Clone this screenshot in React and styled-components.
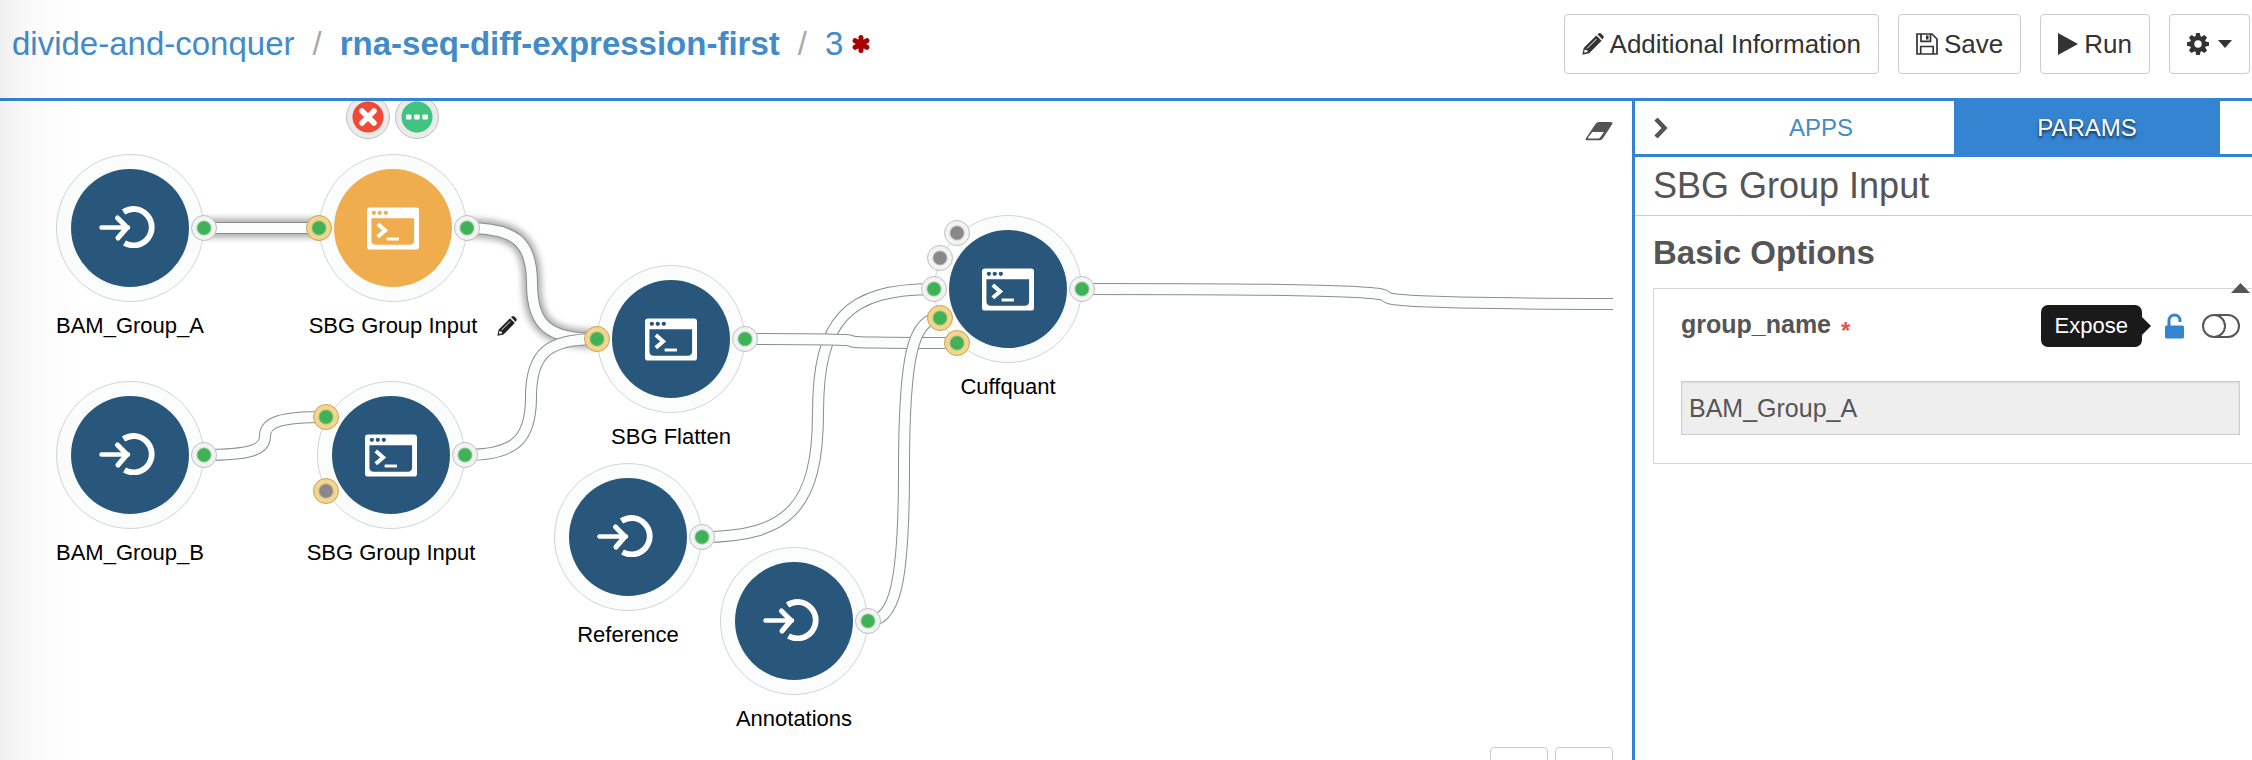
import React from "react";
import styled, { createGlobalStyle, css } from "styled-components";

const BLUE = "#3484d2";
const LINK = "#428bca";
const NAVY = "#29567b";
const INK = "#333";
const TEXT = "#555";

const GlobalStyle = createGlobalStyle`
  *, *::before, *::after { box-sizing: border-box; }
  body {
    margin: 0;
    background: #fff;
    color: ${TEXT};
    font-family: "Liberation Sans", Arial, Helvetica, sans-serif;
    font-size: 25px;
  }
  button, input { font: inherit; color: inherit; }
`;

const Page = styled.div`
  position: relative;
  display: flex;
  flex-direction: column;
  height: 100vh;
  overflow: hidden;

  &::after {
    content: "";
    position: absolute;
    inset: 0 auto 0 0;
    width: 80px;
    background: linear-gradient(to right, rgba(0, 0, 0, 0.06), rgba(0, 0, 0, 0.02) 40%, transparent);
    pointer-events: none;
  }
`;

const Header = styled.header`
  display: flex;
  align-items: flex-start;
  justify-content: space-between;
  height: 101px;
  flex: none;
  padding: 14px 2px 0 12px;
  border-bottom: 3px solid ${BLUE};
`;

const Crumbs = styled.nav`
  display: flex;
  align-items: center;
  gap: 18px;
  height: 60px;
  font-size: 33px;
  color: #aaa;
`;

const Crumb = styled.a`
  color: ${LINK};
  text-decoration: none;
  font-weight: ${(p) => (p.$strong ? 700 : 400)};
`;

const Revision = styled.span`
  display: flex;
  align-items: center;
  gap: 9px;
`;

const Actions = styled.div`
  display: flex;
  align-items: center;
  gap: 19px;
`;

const ToolButton = styled.button`
  display: flex;
  align-items: center;
  gap: ${(p) => (p.$menu ? 9 : 6)}px;
  height: 60px;
  padding: 0 17px;
  border: 1px solid #ccc;
  border-radius: 4px;
  background: #fff;
  color: ${INK};
  font-size: 26px;
`;

const Workspace = styled.div`
  display: flex;
  flex: 1;
  min-height: 0;
`;

const Canvas = styled.main`
  position: relative;
  flex: 1;
  min-width: 0;
  margin-right: 19px;
  overflow: hidden;
`;

const Wires = styled.svg`
  position: absolute;
  inset: 0;
  width: 100%;
  height: 100%;
`;

const EraseButton = styled.button`
  position: absolute;
  top: 20px;
  right: 0;
  display: flex;
  padding: 0;
  border: 0;
  background: none;
`;

const ZoomControls = styled.div`
  position: absolute;
  right: 0;
  bottom: -44px;
  display: flex;
  gap: 7px;
`;

const ZoomButton = styled.button`
  width: 58px;
  height: 57px;
  border: 1px solid #ccc;
  border-radius: 4px;
  background: #fff;
`;

const NodeBox = styled.div`
  position: absolute;
  left: ${(p) => p.$x - 74}px;
  top: ${(p) => p.$y - 74}px;
  width: 148px;
  display: flex;
  flex-direction: column;
  align-items: center;
  gap: 11px;
`;

const Ring = styled.div`
  position: relative;
  display: flex;
  align-items: center;
  justify-content: center;
  width: 148px;
  height: 148px;
  border: 1px solid #d4d4d4;
  border-radius: 50%;
  background: #fbfdfc;
`;

const Disc = styled.div`
  display: flex;
  align-items: center;
  justify-content: center;
  width: 118px;
  height: 118px;
  padding: ${(p) => (p.$app ? "0" : "0 5px 2px 0")};
  border-radius: 50%;
  background: ${(p) => (p.$selected ? "#f0ad4e" : NAVY)};
  color: ${(p) => (p.$selected ? "#f0ad4e" : NAVY)};
`;

const Label = styled.div`
  font-size: 22px;
  line-height: 26px;
  color: #000;
  white-space: nowrap;
`;

const Port = styled.div`
  position: absolute;
  left: ${(p) => 60 + p.$dx}px;
  top: ${(p) => 60 + p.$dy}px;
  width: 26px;
  height: 26px;
  border-radius: 50%;
  border: 1px solid #bfbfbf;
  background: radial-gradient(circle, ${(p) => (p.$linked ? "#40b157" : "#888")} 6px, ${(p) => (p.$required ? "#f4d590" : "#f3f3f3")} 8px);
  ${(p) => p.$required && css`border-color: #c4a155;`}
`;

const NodeActions = styled.div`
  position: absolute;
  left: 27px;
  top: -59px;
  display: flex;
  gap: 5px;
`;

const RoundButton = styled.button`
  display: flex;
  align-items: center;
  justify-content: center;
  width: 44px;
  height: 44px;
  padding: 0;
  border: 1px solid #c0c0c0;
  border-radius: 50%;
  background: radial-gradient(circle, ${(p) => p.$color} 15px, #ebebeb 16px);
`;

const RenameButton = styled.button`
  position: absolute;
  left: 178px;
  top: 162px;
  display: flex;
  padding: 0;
  border: 0;
  background: none;
`;

const Panel = styled.aside`
  flex: none;
  width: 620px;
  border-left: 3px solid ${BLUE};
`;

const Tabs = styled.div`
  display: flex;
  height: 56px;
  border-bottom: 3px solid ${BLUE};
`;

const Collapse = styled.button`
  display: flex;
  align-items: center;
  width: 53px;
  padding: 0 0 0 18px;
  border: 0;
  background: none;
`;

const Tab = styled.button`
  width: 266px;
  padding: 0;
  border: 0;
  font-size: 24px;
  background: ${(p) => (p.$active ? BLUE : "none")};
  color: ${(p) => (p.$active ? "#fff" : LINK)};
  text-shadow: ${(p) => (p.$active ? "0 2px 3px rgba(0, 0, 0, 0.7)" : "none")};
`;

const PanelTitle = styled.h1`
  margin: 0;
  padding: 8px 18px;
  font-size: 36px;
  line-height: 42px;
  font-weight: 400;
  border-bottom: 1px solid #ccc;
`;

const SectionTitle = styled.h2`
  margin: 0;
  padding: 18px 18px 16px;
  font-size: 33px;
  line-height: 38px;
`;

const Card = styled.section`
  position: relative;
  margin-left: 18px;
  padding: 16px 12px 28px 27px;
  border: 1px solid #d4d4d4;
  border-right: 0;
`;

const SortMark = styled.svg`
  position: absolute;
  top: -6px;
  right: 2px;
`;

const FieldHead = styled.div`
  display: flex;
  align-items: center;
  justify-content: space-between;
  height: 42px;
`;

const FieldLabel = styled.label`
  font-weight: 700;
`;

const Required = styled.span`
  margin-left: 3px;
  font-size: 24px;
  line-height: 1;
  vertical-align: sub;
  color: #e05551;
`;

const FieldTools = styled.div`
  display: flex;
  align-items: center;
`;

const Tip = styled.div`
  position: relative;
  margin-right: 23px;
  padding: 0 14px;
  border-radius: 7px;
  background: #1a1a1a;
  color: #fff;
  font-size: 22px;
  line-height: 42px;

  &::after {
    content: "";
    position: absolute;
    left: 100%;
    top: 12px;
    border: 9px solid transparent;
    border-left-color: #1a1a1a;
    border-right: 0;
  }
`;

const IconButton = styled.button`
  display: flex;
  margin-left: ${(p) => p.$gap || 0}px;
  padding: 0;
  border: 0;
  background: none;
`;

const TextField = styled.input`
  display: block;
  width: 100%;
  height: 54px;
  margin-top: 34px;
  padding: 0 7px;
  border: 1px solid #ccc;
  border-radius: 0;
  background: #eee;
  box-shadow: inset 0 1px 2px rgba(0, 0, 0, 0.08);
`;

const PencilIcon = ({ size = 22, color = INK }) => (
  <svg width={size} height={size} viewBox="0 0 22 22" aria-hidden="true">
    <path fill={color} d="M15.4 1.2 17 .2q1-.5 2 .4l2.200 2.200q.9 1 .3 2l-1 1.700zM14.300 2.400l5.300 5.300L7.200 20.300.4 21.700l1.300-6.700zM2.700 16.200l-.6 3.500 3.500-.7-.2-1.800-2-.2z" fillRule="evenodd" />
    <path d="M5 15.500 14.500 6" stroke="#fff" strokeWidth="1" fill="none" />
  </svg>
);

const FloppyIcon = () => (
  <svg width="22" height="22" viewBox="0 0 22 22" fill="none" stroke={INK} strokeWidth="1.700" aria-hidden="true">
    <path d="M1 1h15l5 5v15H1zM4.700 21v-7.500h12.500V21" />
    <path d="M5 1v7.300h9.500V1" />
    <path d="M10 2.500h2.500v4H10z" fill={INK} stroke="none" />
  </svg>
);

const PlayIcon = () => (
  <svg width="20" height="22" viewBox="0 0 20 22" aria-hidden="true">
    <path d="M0 0 20 11 0 22z" fill={INK} />
  </svg>
);

const GearIcon = () => (
  <svg width="22" height="22" viewBox="-11 -11 22 22" aria-hidden="true">
    <g fill={INK}>
      {[0, 45, 90, 135].map((a) => (
        <path key={a} d="M-2.500-8-1.800-11H1.800L2.500-8V8L1.800 11H-1.800L-2.500 8z" transform={`rotate(${a})`} />
      ))}
      <circle r="8" />
    </g>
    <circle r="3.700" fill="#fff" />
  </svg>
);

const CaretIcon = () => (
  <svg width="14" height="8" viewBox="0 0 14 8" aria-hidden="true">
    <path d="M0 0h14L7 8z" fill={INK} />
  </svg>
);

const ModifiedIcon = () => (
  <svg width="18" height="18" viewBox="-9 -9 18 18" role="img" aria-label="modified">
    <g stroke="#a00" strokeWidth="5" strokeLinecap="round">
      <path d="M0-6.500v13M-5.900-3.300 5.900 3.300M-5.900 3.300 5.900-3.300" />
    </g>
  </svg>
);

const EraserIcon = () => (
  <svg width="28" height="20" viewBox="0 0 28 20" aria-hidden="true">
    <path d="M14 1H26q2 0 1.300 2L18 17.200Q16.700 19.300 14.500 19.300H2Q0 19.300.9 17.200L10.500 3Q12 1 14 1z" fill={TEXT} />
    <path d="M7.400 11h11.500l-3.600 5.200q-.9 1.300-2.200 1.300H3.400q-.8 0-.3-.9z" fill="#fff" />
  </svg>
);

const ChevronIcon = () => (
  <svg width="15" height="22" viewBox="0 0 15 22" fill="none" aria-hidden="true">
    <path d="m3 2 8.500 9L3 20" stroke={TEXT} strokeWidth="4.500" />
  </svg>
);

const LockIcon = () => (
  <svg width="20" height="26" viewBox="0 0 20 26" aria-hidden="true">
    <rect x="0" y="12.500" width="19" height="13" rx="1.500" fill={BLUE} />
    <path d="M4 13V7.500a5.500 5.500 0 0 1 11 0V9" fill="none" stroke={BLUE} strokeWidth="3" />
  </svg>
);

const ToggleIcon = () => (
  <svg width="38" height="24" viewBox="0 0 38 24" fill="none" stroke={TEXT} strokeWidth="2" aria-hidden="true">
    <rect x="1" y="1" width="36" height="22" rx="11" />
    <path d="M12 1a11 11 0 0 1 0 22" />
  </svg>
);

const CrossIcon = () => (
  <svg width="18" height="18" viewBox="0 0 18 18" aria-hidden="true">
    <path d="m3 3 12 12M15 3 3 15" stroke="#fff" strokeWidth="5.500" strokeLinecap="round" />
  </svg>
);

const DotsIcon = () => (
  <svg width="22" height="6" viewBox="0 0 22 6" fill="#fff" aria-hidden="true">
    <rect x="0" y="0.500" width="5.500" height="5" rx="1" />
    <rect x="8.200" y="0.500" width="5.500" height="5" rx="1" />
    <rect x="16.400" y="0.500" width="5.500" height="5" rx="1" />
  </svg>
);

const InputIcon = () => (
  <svg width="58" height="42" viewBox="0 0 58 42" fill="none" stroke="#fff" aria-hidden="true">
    <path d="M2.500 21.500H29" strokeWidth="4.500" strokeLinecap="round" />
    <path d="M18.500 12 28 21.500 19 32" strokeWidth="5" strokeLinecap="round" strokeLinejoin="round" />
    <path d="M24.500 6A18.200 18.200 0 1 1 25.500 37" strokeWidth="5.800" />
  </svg>
);

const AppIcon = () => (
  <svg width="52" height="43" viewBox="0 0 53 43" aria-hidden="true">
    <rect width="53" height="43" rx="3" fill="#fff" />
    <g fill="currentColor">
      <path d="M4.500 11h43.500v22.500q0 4.500-4.500 4.500h-34.500q-4.500 0-4.500-4.500z" />
      <circle cx="7" cy="5.500" r="2.200" />
      <circle cx="13" cy="5.500" r="2.200" />
      <circle cx="19.200" cy="5.500" r="2.200" />
    </g>
    <path d="m11 17 7.500 6.500L11 30" fill="none" stroke="#fff" strokeWidth="4" />
    <path d="M20 32.200h12.500" stroke="#fff" strokeWidth="3" />
  </svg>
);

const LEFT = { dx: -74, dy: 0 };
const RIGHT = { dx: 74, dy: 0, linked: true };

const NODES = [
  { id: "bam-a", label: "BAM_Group_A", x: 130, y: 127, kind: "input", ports: [RIGHT] },
  {
    id: "group-a", label: "SBG Group Input", x: 393, y: 127, kind: "app", selected: true,
    ports: [{ ...LEFT, linked: true, required: true }, RIGHT],
  },
  { id: "bam-b", label: "BAM_Group_B", x: 130, y: 354, kind: "input", ports: [RIGHT] },
  {
    id: "group-b", label: "SBG Group Input", x: 391, y: 354, kind: "app",
    ports: [
      { dx: -65, dy: -38, linked: true, required: true },
      { dx: -65, dy: 36, required: true },
      RIGHT,
    ],
  },
  {
    id: "flatten", label: "SBG Flatten", x: 671, y: 238, kind: "app",
    ports: [{ ...LEFT, linked: true, required: true }, RIGHT],
  },
  { id: "reference", label: "Reference", x: 628, y: 436, kind: "input", ports: [RIGHT] },
  { id: "annotations", label: "Annotations", x: 794, y: 520, kind: "input", ports: [RIGHT] },
  {
    id: "cuffquant", label: "Cuffquant", x: 1008, y: 188, kind: "app",
    ports: [
      { dx: -51, dy: -56 },
      { dx: -68, dy: -31 },
      { ...LEFT, linked: true },
      { dx: -68, dy: 29, linked: true, required: true },
      { dx: -51, dy: 54, linked: true, required: true },
      RIGHT,
    ],
  },
];

const LINKS = [
  { from: [204, 127], to: [319, 127], glow: true },
  { from: [467, 127], to: [597, 238], glow: true },
  { from: [204, 354], to: [326, 316] },
  { from: [465, 354], to: [597, 238] },
  { from: [702, 436], to: [934, 188] },
  { from: [745, 238], to: [957, 242] },
  { from: [868, 520], to: [940, 217] },
  { from: [1082, 188], to: [1690, 203] },
];

function wirePath({ from: [x1, y1], to: [x2, y2] }) {
  const mx = (x1 + x2) / 2;
  const my = (y1 + y2) / 2;
  const w = mx - x1;
  const h = my - y1;
  return `M${x1} ${y1}C${x1 + w * 0.75} ${y1} ${mx} ${y1 + h * 0.25} ${mx} ${my}S${x1 + w * 1.25} ${y2} ${x2} ${y2}`;
}

function Wire({ link }) {
  const d = wirePath(link);
  return (
    <g fill="none">
      {link.glow && <path d={d} stroke="#000" strokeOpacity="0.32" strokeWidth="19" filter="url(#glow)" />}
      <path d={d} stroke="#8c8c8c" strokeWidth="12" />
      <path d={d} stroke="#fbfdfc" strokeWidth="10" />
    </g>
  );
}

function Node({ node }) {
  const app = node.kind === "app";
  return (
    <NodeBox $x={node.x} $y={node.y}>
      <Ring>
        <Disc $app={app} $selected={node.selected}>{app ? <AppIcon /> : <InputIcon />}</Disc>
        {node.ports.map((p) => (
          <Port key={`${p.dx}:${p.dy}`} $dx={p.dx} $dy={p.dy} $linked={p.linked} $required={p.required} />
        ))}
      </Ring>
      <Label>{node.label}</Label>
      {node.selected && (
        <>
          <NodeActions>
            <RoundButton $color="#f04a37" aria-label="Remove"><CrossIcon /></RoundButton>
            <RoundButton $color="#40c482" aria-label="Details"><DotsIcon /></RoundButton>
          </NodeActions>
          <RenameButton aria-label="Rename"><PencilIcon size={20} color="#222" /></RenameButton>
        </>
      )}
    </NodeBox>
  );
}

export default function App() {
  return (
    <>
      <GlobalStyle />
      <Page>
        <Header>
          <Crumbs aria-label="Breadcrumb">
            <Crumb href="#project">divide-and-conquer</Crumb>
            <span>/</span>
            <Crumb href="#workflow" $strong>rna-seq-diff-expression-first</Crumb>
            <span>/</span>
            <Revision>
              <Crumb href="#revision">3</Crumb>
              <ModifiedIcon />
            </Revision>
          </Crumbs>
          <Actions>
            <ToolButton><PencilIcon />Additional Information</ToolButton>
            <ToolButton><FloppyIcon />Save</ToolButton>
            <ToolButton><PlayIcon />Run</ToolButton>
            <ToolButton $menu aria-label="Settings"><GearIcon /><CaretIcon /></ToolButton>
          </Actions>
        </Header>
        <Workspace>
          <Canvas>
            <Wires>
              <defs>
                <filter id="glow" x="0" y="0" width="100%" height="100%" filterUnits="userSpaceOnUse">
                  <feGaussianBlur stdDeviation="3" />
                </filter>
              </defs>
              {LINKS.map((l) => <Wire key={`${l.from}-${l.to}`} link={l} />)}
            </Wires>
            {NODES.map((n) => <Node key={n.id} node={n} />)}
            <EraseButton aria-label="Clear canvas"><EraserIcon /></EraseButton>
            <ZoomControls>
              <ZoomButton aria-label="Zoom out" />
              <ZoomButton aria-label="Zoom in" />
            </ZoomControls>
          </Canvas>
          <Panel>
            <Tabs>
              <Collapse aria-label="Collapse panel"><ChevronIcon /></Collapse>
              <Tab>APPS</Tab>
              <Tab $active>PARAMS</Tab>
            </Tabs>
            <PanelTitle>SBG Group Input</PanelTitle>
            <SectionTitle>Basic Options</SectionTitle>
            <Card>
              <SortMark width="19" height="10" viewBox="0 0 19 10" aria-hidden="true">
                <path d="M0 10 9.500 0 19 10z" fill={TEXT} />
              </SortMark>
              <FieldHead>
                <FieldLabel htmlFor="group-name">group_name <Required>*</Required></FieldLabel>
                <FieldTools>
                  <Tip role="tooltip">Expose</Tip>
                  <IconButton aria-label="Expose"><LockIcon /></IconButton>
                  <IconButton $gap={17} aria-label="Include"><ToggleIcon /></IconButton>
                </FieldTools>
              </FieldHead>
              <TextField id="group-name" defaultValue="BAM_Group_A" />
            </Card>
          </Panel>
        </Workspace>
      </Page>
    </>
  );
}
